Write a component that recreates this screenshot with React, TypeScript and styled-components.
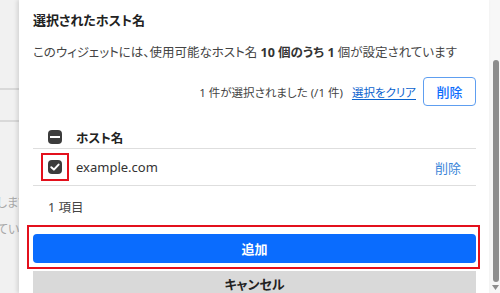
import React from "react";
import styled, { createGlobalStyle } from "styled-components";

const GlobalStyle = createGlobalStyle`
  html, body { margin: 0; padding: 0; }
  body {
    width: 500px;
    height: 293px;
    overflow: hidden;
    font-family: "Noto Sans", "Noto Sans CJK JP", sans-serif;
    font-feature-settings: "palt";
    color: #333;
    background: #f2f2f2;
  }
`;

const Page = styled.div`
  display: flex;
  width: 500px;
  height: 293px;
  overflow: hidden;
`;

const BackPage = styled.div`
  width: 19px;
  flex: none;
  overflow: hidden;
  background: #f1f1f1;
  display: flex;
  flex-direction: column;
  padding-top: 88px;
  box-sizing: border-box;
`;

const BackRow = styled.div<{ $h: number }>`
  height: ${(p) => p.$h}px;
  border-top: 2px solid #d9d9d9;
  flex: none;
`;

const BackText = styled.div<{ $gap: number }>`
  margin-top: ${(p) => p.$gap}px;
  margin-left: -3px;
  white-space: nowrap;
  font-size: 12px;
  line-height: 16px;
  color: #a8a8a8;
`;

const Dialog = styled.div`
  flex: 1;
  background: #fff;
  box-shadow: -2px 0 4px rgba(0, 0, 0, 0.12);
  padding: 10px 13px 0 14px;
  display: flex;
  flex-direction: column;
  position: relative;
  z-index: 1;
`;

const Title = styled.div`
  font-size: 13px;
  line-height: 20px;
  font-weight: 600;
  color: #222;
`;

const Description = styled.div`
  margin-top: 13px;
  font-size: 12.5px;
  line-height: 20px;
  color: #444;
  white-space: nowrap;
  b {
    font-weight: 700;
    color: #333;
  }
`;

const SelectionBar = styled.div`
  margin-top: 14px;
  display: flex;
  align-items: center;
  justify-content: flex-end;
  height: 29px;
  font-size: 11.5px;
  color: #444;
  white-space: nowrap;
`;

const ClearLink = styled.a`
  margin-left: 9px;
  color: #0b63ce;
  text-decoration: underline;
  text-underline-offset: 2px;
  cursor: pointer;
`;

const OutlineButton = styled.button`
  margin-left: 7px;
  width: 53px;
  height: 29px;
  border: 1px solid #5e9ef0;
  border-radius: 4px;
  background: #fff;
  color: #0d6efd;
  font-family: inherit;
  font-feature-settings: "palt";
  font-size: 13px;
  font-weight: 500;
  padding: 0;
`;

const Table = styled.div`
  margin-top: 20px;
  display: flex;
  flex-direction: column;
`;

const Row = styled.div<{ $h: number }>`
  display: grid;
  grid-template-columns: 43px 1fr auto;
  align-items: center;
  height: ${(p) => p.$h}px;
  border-bottom: 1px solid #dedede;
`;

const CheckCell = styled.div`
  display: flex;
  justify-content: center;
  align-items: center;
`;

const HeaderText = styled.div`
  font-size: 12.5px;
  font-weight: 700;
  color: #222;
`;

const CellText = styled.div`
  font-size: 13px;
  color: #333;
`;

const RowLink = styled.a`
  font-size: 13px;
  color: #3b86d9;
  margin-right: 15px;
  cursor: pointer;
`;

const Box = styled.span`
  width: 14px;
  height: 14px;
  border-radius: 4px;
  background: #3c3c3c;
  display: flex;
  align-items: center;
  justify-content: center;
  flex: none;
`;

const CheckHighlight = styled.span`
  width: 28px;
  height: 28px;
  box-sizing: border-box;
  border: 2px solid #e3101c;
  display: flex;
  align-items: center;
  justify-content: center;
`;

const Footer = styled.div`
  margin-top: 12px;
  padding-left: 15px;
  font-size: 12.5px;
  line-height: 20px;
  color: #444;
`;

const ButtonHighlight = styled.div`
  margin: 7px -4px 0 -6px;
  border: 2px solid #e3101c;
  padding: 7px 2px 4px 4px;
`;

const PrimaryButton = styled.button`
  display: block;
  width: 100%;
  height: 29px;
  border: none;
  border-radius: 4px;
  background: #0a6cfe;
  color: #fff;
  font-family: inherit;
  font-feature-settings: "palt";
  font-size: 13px;
  font-weight: 700;
  padding: 0;
`;

const SecondaryButton = styled.button`
  margin-top: 2px;
  width: 100%;
  height: 30px;
  border: none;
  border-radius: 0;
  background: #d9d9d9;
  color: #222;
  font-family: inherit;
  font-feature-settings: "palt";
  font-size: 13px;
  font-weight: 700;
  line-height: 26px;
  padding: 0 0 4px;
  flex: none;
`;

const ScrollTrack = styled.div`
  width: 11px;
  flex: none;
  background: #f7f7f7;
  display: flex;
  flex-direction: column;
  align-items: center;
  padding-top: 60px;
  box-sizing: border-box;
`;

const ScrollThumb = styled.div`
  width: 6px;
  height: 222px;
  border-radius: 3px;
  background: #8d8d8d;
  margin-left: 2px;
`;

const ScrollArrow = styled.svg`
  margin-top: 3px;
  margin-left: 2px;
`;

const MinusIcon = () => (
  <Box>
    <svg width="14" height="14" viewBox="0 0 14 14">
      <rect x="2" y="6" width="10" height="2" fill="#fff" />
    </svg>
  </Box>
);

const CheckIcon = () => (
  <Box>
    <svg width="14" height="14" viewBox="0 0 14 14">
      <path d="M3.3 7.2 L5.9 9.6 L10.6 4.6" stroke="#fff" strokeWidth="2" fill="none" strokeLinecap="round" strokeLinejoin="round" />
    </svg>
  </Box>
);

export default function App() {
  return (
    <>
      <GlobalStyle />
      <Page>
        <BackPage>
          <BackRow $h={30} />
          <BackRow $h={70} />
          <BackText $gap={3}>します</BackText>
          <BackText $gap={11}>ています</BackText>
        </BackPage>
        <Dialog>
          <Title>選択されたホスト名</Title>
          <Description>
            このウィジェットには、使用可能なホスト名 <b>10 個のうち 1</b> 個が設定されています
          </Description>
          <SelectionBar>
            1 件が選択されました (/1 件)
            <ClearLink>選択をクリア</ClearLink>
            <OutlineButton>削除</OutlineButton>
          </SelectionBar>
          <Table>
            <Row $h={22}>
              <CheckCell>
                <MinusIcon />
              </CheckCell>
              <HeaderText>ホスト名</HeaderText>
              <span />
            </Row>
            <Row $h={36}>
              <CheckCell>
                <CheckHighlight>
                  <CheckIcon />
                </CheckHighlight>
              </CheckCell>
              <CellText>example.com</CellText>
              <RowLink>削除</RowLink>
            </Row>
          </Table>
          <Footer>1 項目</Footer>
          <ButtonHighlight>
            <PrimaryButton>追加</PrimaryButton>
          </ButtonHighlight>
          <SecondaryButton>キャンセル</SecondaryButton>
        </Dialog>
        <ScrollTrack>
          <ScrollThumb />
          <ScrollArrow width="7" height="5" viewBox="0 0 7 5">
            <path d="M0 0 L7 0 L3.5 5 Z" fill="#8d8d8d" />
          </ScrollArrow>
        </ScrollTrack>
      </Page>
    </>
  );
}
